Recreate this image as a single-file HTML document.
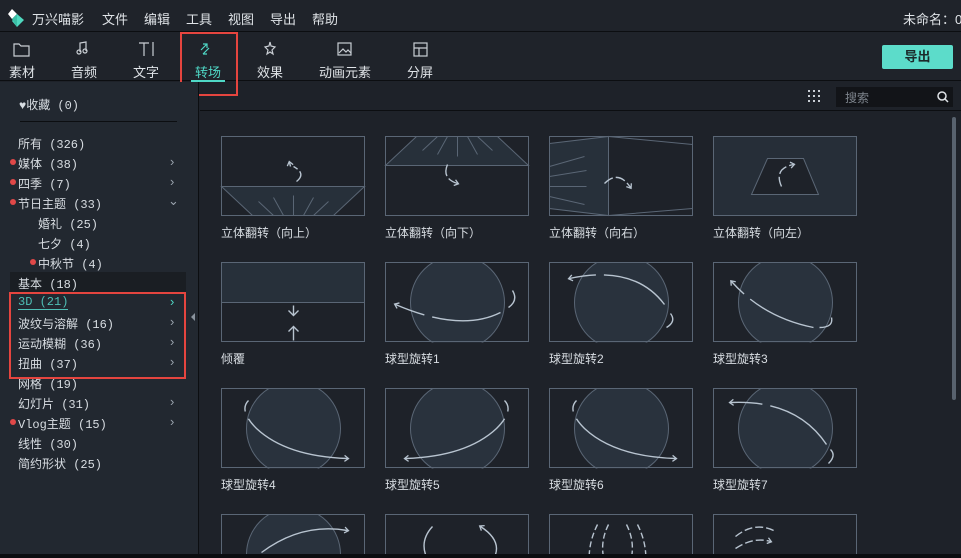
<!DOCTYPE html>
<html><head><meta charset="utf-8"><style>
*{margin:0;padding:0;box-sizing:border-box}
html,body{width:961px;height:558px;overflow:hidden}
body{background:#1e2229;font-family:"Liberation Sans","Noto Sans CJK SC",sans-serif;color:#d6dbe0;position:relative}
.a{position:absolute;white-space:nowrap}
.t{font-size:13px;color:#dfe3e7}
.side{font-size:12px;color:#d8dde2;font-family:"Liberation Mono","Noto Sans CJK SC",monospace}
.lab{font-size:12px;color:#d8dde2}
.dot{position:absolute;width:6px;height:6px;border-radius:3px;background:#e04848}
.chev{position:absolute;font-size:13px;color:#9aa3ad}
</style></head><body>
<div class="a" style="left:0;top:0;width:961px;height:32px;background:#1f232a;border-bottom:1px solid #0c0e11"></div>
<svg class="a" style="left:8px;top:7px" width="18" height="20"><polygon points="4,2 9,7 4,12 0,7" fill="#fff"/><polygon points="9,7 16,13 9,20 4,14" fill="#4fd8bf"/><polygon points="4,12 9,7 9,20" fill="#3bbfa6"/></svg>
<div class="a t" style="left:32px;top:9px">万兴喵影</div>
<div class="a t" style="left:102px;top:9px">文件</div>
<div class="a t" style="left:144px;top:9px">编辑</div>
<div class="a t" style="left:186px;top:9px">工具</div>
<div class="a t" style="left:228px;top:9px">视图</div>
<div class="a t" style="left:270px;top:9px">导出</div>
<div class="a t" style="left:312px;top:9px">帮助</div>
<div class="a t" style="left:903px;top:9px">未命名：0</div>
<div class="a" style="left:0;top:32px;width:961px;height:49px;background:#1f232a;border-bottom:1px solid #0c0e11"></div>
<svg class="a" style="left:0;top:32px" width="460" height="48" fill="none" stroke="#c9ced4" stroke-width="1.2">
<path d="M14,12 h5 l2,2 h8 v10 h-15 z"/>
<path d="M80,20 v-9 l6,-1 v9"/><circle cx="79" cy="20" r="2"/><circle cx="85" cy="19" r="2"/>
<path d="M139,11 h10 M144,11 v13 M153,10 v14"/>
<path d="M201,18 l6,-6 M203,12 h4 v4 M209,16 l-6,6 M203,22 h4" stroke="#4fd8c6"/>
<path d="M270,10 l1,4 4,1 -3,3 1,4 -3,-2 -3,2 1,-4 -3,-3 4,-1z"/>
<rect x="338" y="11" width="13" height="12"/><path d="M339,21 l4,-4 3,3 2,-2 3,3"/>
<rect x="414" y="11" width="13" height="13"/><path d="M414,16 h13 M419,16 v8"/>
</svg>
<div class="a t" style="left:9px;top:62px">素材</div>
<div class="a t" style="left:71px;top:62px">音频</div>
<div class="a t" style="left:133px;top:62px">文字</div>
<div class="a t" style="left:195px;top:62px;color:#4fd8c6">转场</div>
<div class="a t" style="left:257px;top:62px">效果</div>
<div class="a t" style="left:319px;top:62px">动画元素</div>
<div class="a t" style="left:407px;top:62px">分屏</div>
<div class="a" style="left:191px;top:80px;width:34px;height:2px;background:#4fd8c6"></div>
<div class="a" style="left:180px;top:32px;width:58px;height:64px;border:2px solid #e5453f"></div>
<div class="a" style="left:882px;top:45px;width:71px;height:24px;background:#5cdcca;border-radius:2px;color:#1b2a2a;font-size:13px;font-weight:bold;text-align:center;line-height:24px">导出</div>
<div class="a" style="left:0;top:82px;width:199px;height:472px;background:#222830;border-right:1px solid #0c0e11"></div>
<div class="a side" style="left:19px;top:96px">♥收藏 (0)</div>
<div class="a" style="left:20px;top:121px;width:157px;height:1px;background:#0c0e11"></div>
<div class="a" style="left:10px;top:272px;width:176px;height:20px;background:#1a1e23"></div>
<div class="a side" style="left:18px;top:135px">所有 (326)</div>
<div class="dot" style="left:10px;top:159px"></div><div class="a side" style="left:18px;top:155px">媒体 (38)</div><div class="chev" style="left:170px;top:154px">›</div>
<div class="dot" style="left:10px;top:179px"></div><div class="a side" style="left:18px;top:175px">四季 (7)</div><div class="chev" style="left:170px;top:174px">›</div>
<div class="dot" style="left:10px;top:199px"></div><div class="a side" style="left:18px;top:195px">节日主题 (33)</div><div class="chev" style="left:168px;top:193px">⌄</div>
<div class="a side" style="left:38px;top:215px">婚礼 (25)</div>
<div class="a side" style="left:38px;top:235px">七夕 (4)</div>
<div class="dot" style="left:30px;top:259px"></div><div class="a side" style="left:38px;top:255px">中秋节 (4)</div>
<div class="a side" style="left:18px;top:275px;border-bottom:1px solid #ddd">基本 (18)</div>
<div class="a side" style="left:18px;top:295px;color:#4fbfb6;border-bottom:1px solid #4fbfb6">3D (21)</div><div class="chev" style="left:170px;top:294px;color:#4fd8c6">›</div>
<div class="a side" style="left:18px;top:315px">波纹与溶解 (16)</div><div class="chev" style="left:170px;top:314px">›</div>
<div class="a side" style="left:18px;top:335px">运动模糊 (36)</div><div class="chev" style="left:170px;top:334px">›</div>
<div class="a side" style="left:18px;top:355px">扭曲 (37)</div><div class="chev" style="left:170px;top:354px">›</div>
<div class="a side" style="left:18px;top:375px">网格 (19)</div>
<div class="a side" style="left:18px;top:395px">幻灯片 (31)</div><div class="chev" style="left:170px;top:394px">›</div>
<div class="dot" style="left:10px;top:419px"></div><div class="a side" style="left:18px;top:415px">Vlog主题 (15)</div><div class="chev" style="left:170px;top:414px">›</div>
<div class="a side" style="left:18px;top:435px">线性 (30)</div>
<div class="a side" style="left:18px;top:455px">简约形状 (25)</div>
<div class="a" style="left:9px;top:292px;width:177px;height:87px;border:2px solid #e5453f"></div>
<div class="a" style="left:191px;top:313px;width:0;height:0;border-top:4px solid transparent;border-bottom:4px solid transparent;border-right:4px solid #8a939d"></div>
<div class="a" style="left:200px;top:82px;width:761px;height:29px;border-bottom:1px solid #0c0e11"></div>
<svg class="a" style="left:808px;top:90px" width="14" height="14" fill="#c9ced4"><rect x="0" y="0" width="2" height="2"/><rect x="5" y="0" width="2" height="2"/><rect x="10" y="0" width="2" height="2"/><rect x="0" y="5" width="2" height="2"/><rect x="5" y="5" width="2" height="2"/><rect x="10" y="5" width="2" height="2"/><rect x="0" y="10" width="2" height="2"/><rect x="5" y="10" width="2" height="2"/><rect x="10" y="10" width="2" height="2"/></svg>
<div class="a" style="left:836px;top:87px;width:117px;height:20px;background:#121418"></div>
<div class="a" style="left:845px;top:89px;font-size:12px;color:#7d848c">搜索</div>
<svg class="a" style="left:937px;top:91px" width="12" height="12" fill="none" stroke="#dfe3e7" stroke-width="1.5"><circle cx="5" cy="5" r="4"/><path d="M8,8 l3,3"/></svg>
<div class="a" style="left:952px;top:117px;width:4px;height:283px;background:#58626e;border-radius:2px"></div>
<svg class="a" style="left:0;top:0" width="961" height="554">
<defs><clipPath id="c"><rect x="0" y="0" width="144" height="80"/></clipPath>
<marker id="m" markerWidth="8" markerHeight="8" refX="4" refY="4" orient="auto" markerUnits="userSpaceOnUse"><path d="M1,1 L5,4 L1,7" fill="none" stroke="#b8c4d0" stroke-width="1.3"/></marker></defs>
<g fill="none" stroke="#5a6675" stroke-width="1">
<g transform="translate(221.5,136.5)"><polygon points="0,50 143,50 112,79 31,79" fill="#27303a"/><path d="M0,0 v8 M143,0 v8 M62,79 l-10,-18 M82,79 l10,-18 M72,79 v-20 M52,79 l-15,-14 M92,79 l15,-14"/><rect width="143" height="79"/><path d="M75,45 q10,-8 -3,-15 M69,30 l-1,-4" stroke="#b8c4d0" stroke-width="1.4" stroke-dasharray="12 3" marker-end="url(#m)"/></g>
<g transform="translate(385.5,136.5)"><polygon points="0,29 143,29 112,0 31,0" fill="#27303a"/><path d="M62,0 l-10,18 M82,0 l10,18 M72,0 v20 M52,0 l-15,14 M92,0 l15,14 M0,71 v8 M143,71 v8"/><rect width="143" height="79"/><path d="M62,28 q-6,14 10,19" stroke="#b8c4d0" stroke-width="1.4" stroke-dasharray="12 3" marker-end="url(#m)"/></g>
<g transform="translate(549.5,136.5)"><polygon points="0,7 59,0 59,79 0,72" fill="#27303a"/><path d="M59,0 L143,8 M59,79 L143,72 M0,30 l35,-10 M0,40 l37,-6 M0,50 l37,0 M0,60 l35,8"/><rect width="143" height="79"/><path d="M55,47 q14,-14 26,4" stroke="#b8c4d0" stroke-width="1.4" stroke-dasharray="10 3" marker-end="url(#m)"/></g>
<g transform="translate(713.5,136.5)"><rect width="143" height="79" fill="#262e38"/><polygon points="54,22 90,22 105,58 38,58" fill="#1e2229"/><path d="M68,50 q-8,-18 12,-22" stroke="#b8c4d0" stroke-width="1.4" stroke-dasharray="10 3" marker-end="url(#m)"/></g>
<g transform="translate(221.5,262.5)"><rect width="143" height="40" fill="#27303a"/><rect width="143" height="79"/><path d="M72,43 v10 M72,78 v-14" stroke="#b8c4d0" stroke-width="1.4"/><path d="M67,48 l5,5 5,-5 M67,69 l5,-5 5,5" stroke="#b8c4d0" stroke-width="1.4"/></g>
<g transform="translate(385.5,262.5)"><g clip-path="url(#c)"><circle cx="72" cy="40" r="47" fill="#29323d"/></g><rect width="143" height="79"/><path d="M127,28 q6,10 -4,17 M115,50 q-40,20 -105,-8" stroke="#b8c4d0" stroke-width="1.4" stroke-dasharray="70 8" marker-end="url(#m)"/></g>
<g transform="translate(549.5,262.5)"><g clip-path="url(#c)"><circle cx="72" cy="40" r="47" fill="#29323d"/></g><rect width="143" height="79"/><path d="M117,65 q10,-6 4,-14 M115,42 q-30,-40 -95,-26" stroke="#b8c4d0" stroke-width="1.4" stroke-dasharray="70 8" marker-end="url(#m)"/></g>
<g transform="translate(713.5,262.5)"><g clip-path="url(#c)"><circle cx="72" cy="40" r="47" fill="#29323d"/></g><rect width="143" height="79"/><path d="M118,55 q2,10 -12,10 M100,65 q-50,-10 -82,-46" stroke="#b8c4d0" stroke-width="1.4" stroke-dasharray="70 8" marker-end="url(#m)"/></g>
<g transform="translate(221.5,388.5)"><g clip-path="url(#c)"><circle cx="72" cy="40" r="47" fill="#29323d"/></g><rect width="143" height="79"/><path d="M27,12 q-10,10 8,28 q30,28 91,30" stroke="#b8c4d0" stroke-width="1.4" stroke-dasharray="12 8 200" marker-end="url(#m)"/></g>
<g transform="translate(385.5,388.5)"><g clip-path="url(#c)"><circle cx="72" cy="40" r="47" fill="#29323d"/></g><rect width="143" height="79"/><path d="M119,12 q10,10 -8,28 q-30,28 -91,30" stroke="#b8c4d0" stroke-width="1.4" stroke-dasharray="12 8 200" marker-end="url(#m)"/></g>
<g transform="translate(549.5,388.5)"><g clip-path="url(#c)"><circle cx="72" cy="40" r="47" fill="#29323d"/></g><rect width="143" height="79"/><path d="M27,12 q-10,10 8,28 q30,28 91,30" stroke="#b8c4d0" stroke-width="1.4" stroke-dasharray="12 8 200" marker-end="url(#m)"/></g>
<g transform="translate(713.5,388.5)"><g clip-path="url(#c)"><circle cx="72" cy="40" r="47" fill="#29323d"/></g><rect width="143" height="79"/><path d="M115,75 q8,-8 2,-14 M113,56 q-30,-45 -96,-42" stroke="#b8c4d0" stroke-width="1.4" stroke-dasharray="70 8" marker-end="url(#m)"/></g>
<g transform="translate(221.5,514.5)"><g clip-path="url(#c)"><circle cx="72" cy="40" r="47" fill="#29323d"/></g><rect width="143" height="79"/><path d="M40,38 q40,-30 86,-22" stroke="#b8c4d0" stroke-width="1.4" marker-end="url(#m)"/></g>
<g transform="translate(385.5,514.5)"><rect width="143" height="79"/><path d="M40,40 q-5,-15 7,-28 M110,40 q5,-15 -15,-28" stroke="#b8c4d0" stroke-width="1.4" marker-end="url(#m)"/></g>
<g transform="translate(549.5,514.5)"><rect width="143" height="79"/><path d="M48,10 q-10,20 -8,40 M59,10 q-10,20 -3,40 M77,10 q10,20 3,40 M88,10 q10,20 8,40" stroke="#b8c4d0" stroke-width="1.4" stroke-dasharray="6 3"/></g>
<g transform="translate(713.5,514.5)"><rect width="143" height="79"/><path d="M22,22 q20,-16 40,-5 M22,34 q18,-12 35,-7" stroke="#b8c4d0" stroke-width="1.4" stroke-dasharray="8 3" marker-end="url(#m)"/></g>
</g></svg>
<div class="a lab" style="left:221px;top:224px">立体翻转（向上）</div>
<div class="a lab" style="left:385px;top:224px">立体翻转（向下）</div>
<div class="a lab" style="left:549px;top:224px">立体翻转（向右）</div>
<div class="a lab" style="left:713px;top:224px">立体翻转（向左）</div>
<div class="a lab" style="left:221px;top:350px">倾覆</div>
<div class="a lab" style="left:385px;top:350px">球型旋转1</div>
<div class="a lab" style="left:549px;top:350px">球型旋转2</div>
<div class="a lab" style="left:713px;top:350px">球型旋转3</div>
<div class="a lab" style="left:221px;top:476px">球型旋转4</div>
<div class="a lab" style="left:385px;top:476px">球型旋转5</div>
<div class="a lab" style="left:549px;top:476px">球型旋转6</div>
<div class="a lab" style="left:713px;top:476px">球型旋转7</div>
<div class="a" style="left:0;top:554px;width:961px;height:4px;background:#0b0d10"></div>
</body></html>
